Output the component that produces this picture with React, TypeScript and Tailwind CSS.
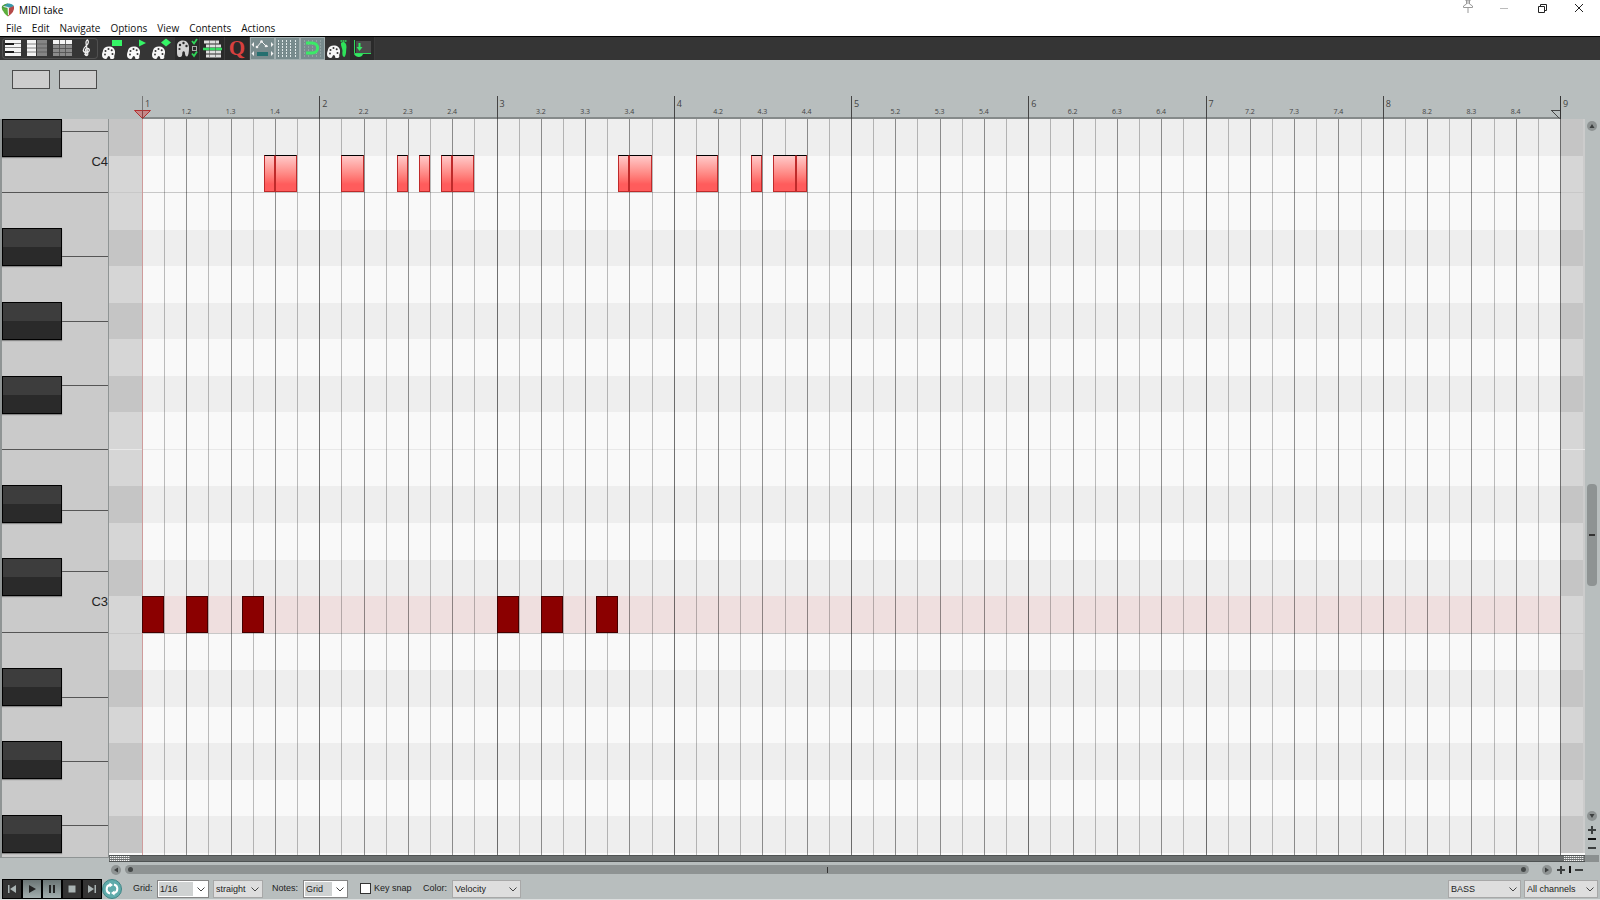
import { useState, type ReactNode } from 'react'

interface Note {
  start: number
  end: number
}

interface PianoKey {
  name: string
  size: number
}

const MENU = ['File', 'Edit', 'Navigate', 'Options', 'View', 'Contents', 'Actions']

const MEASURES = [1, 2, 3, 4, 5, 6, 7, 8]
const BEATS = [1, 2, 3, 4]
const TOTAL_STEPS = 128

// Top to bottom, one entry per semitone
const ROWS = [
  'C#4', 'C4', 'B3', 'A#3', 'A3', 'G#3', 'G3', 'F#3', 'F3', 'E3',
  'D#3', 'D3', 'C#3', 'C3', 'B2', 'A#2', 'A2', 'G#2', 'G2', 'F#2',
]

// White keys, size in twelfths of a row
const WHITE_KEYS: PianoKey[] = [
  { name: 'D4', size: 4 },
  { name: 'C4', size: 20 },
  { name: 'B3', size: 21 },
  { name: 'A3', size: 21 },
  { name: 'G3', size: 21 },
  { name: 'F3', size: 21 },
  { name: 'E3', size: 20 },
  { name: 'D3', size: 20 },
  { name: 'C3', size: 20 },
  { name: 'B2', size: 21 },
  { name: 'A2', size: 21 },
  { name: 'G2', size: 21 },
  { name: 'F2', size: 9 },
]

// Start and end in sixteenths
const NOTES: Record<string, Note[]> = {
  C4: [
    { start: 11, end: 12 },
    { start: 12, end: 14 },
    { start: 18, end: 20 },
    { start: 23, end: 24 },
    { start: 25, end: 26 },
    { start: 27, end: 28 },
    { start: 28, end: 30 },
    { start: 43, end: 44 },
    { start: 44, end: 46 },
    { start: 50, end: 52 },
    { start: 55, end: 56 },
    { start: 57, end: 59 },
    { start: 59, end: 60 },
  ],
  C3: [
    { start: 0, end: 2 },
    { start: 4, end: 6 },
    { start: 9, end: 11 },
    { start: 32, end: 34 },
    { start: 36, end: 38 },
    { start: 41, end: 43 },
  ],
}

const isBlack = (name: string) => name.includes('#')

function Palette({ x, y }: { x: number; y: number }) {
  return (
    <g transform={`translate(${x} ${y})`}>
      <path
        d="M1 4.5C1.5 1.5 5 0 8 .6C11.5 1.2 13.5 4 13 7C12.8 9 12 9.5 12.3 11C12.5 12.5 11.5 13 10 13H8.5C8 12.5 8.3 10 6.8 10C5.3 10 5.5 13 4 13C1.5 13 0 11.5 0 9C0 7 .7 6.500 1 4.500Z"
        fill="#f7f7f7"
      />
      <g fill="#333">
        <circle cx="3.500" cy="5" r="1" />
        <circle cx="6.500" cy="3" r="1" />
        <circle cx="9.700" cy="4.200" r="1" />
        <circle cx="3" cy="8.500" r=".9" />
        <circle cx="10.500" cy="8" r="1" />
      </g>
    </g>
  )
}

const TOOLS: { label: string; tone: 'flat' | 'dark' | 'active'; icon: ReactNode }[] = [
  {
    label: 'Piano roll view',
    tone: 'flat',
    icon: (
      <>
        <rect x="5" y="4" width="16" height="16" fill="#f4f4f4" />
        <path d="M13 7.500H21M13 11.500H21M5 11.500H13M13 16.500H21" stroke="#666" strokeWidth=".8" />
        <path d="M5 8H14M5 16H14" stroke="#1a1a1a" strokeWidth="2" />
      </>
    ),
  },
  {
    label: 'Named notes view',
    tone: 'flat',
    icon: (
      <>
        <rect x="2" y="4" width="9" height="16" fill="#f4f4f4" />
        <rect x="12" y="4" width="10" height="16" fill="#858585" />
        <path d="M2 8H22M2 12H22M2 16H22" stroke="#555" strokeWidth=".7" />
      </>
    ),
  },
  {
    label: 'Event list view',
    tone: 'flat',
    icon: (
      <>
        <rect x="3" y="4" width="19" height="16" fill="#8b8b8b" />
        <rect x="3" y="4" width="19" height="4" fill="#f4f4f4" />
        <path d="M3 8.500H22M3 12.500H22M3 16.500H22M9.500 4V20M15.500 4V20" stroke="#4c4c4c" strokeWidth=".8" />
      </>
    ),
  },
  {
    label: 'Musical notation view',
    tone: 'flat',
    icon: (
      <>
        <path
          d="M10.500 17.500C9.500 19.500 12.800 20.500 12.800 18L11 7C10.800 5 12 4 12.600 4C13.800 5.500 13 8 11.500 9.500C9.500 11.500 8 12.500 8.300 14.500C8.800 17 13.800 17.300 14.300 14.500C14.500 11.800 10.500 11.500 10.500 14C10.500 14.800 11 15.300 11.500 15.500"
          fill="none"
          stroke="#eee"
          strokeWidth="1.300"
        />
        <circle cx="10.700" cy="18.300" r="1.200" fill="#eee" />
      </>
    ),
  },
  {
    label: 'Color by track',
    tone: 'flat',
    icon: (
      <>
        <Palette x={2} y={10} />
        <rect x="12" y="4" width="10" height="6" fill="#35f566" />
      </>
    ),
  },
  {
    label: 'Color by take',
    tone: 'flat',
    icon: (
      <>
        <Palette x={2} y={10} />
        <path d="M14 3.500L21 7L14 10.500Z" fill="#35f566" />
      </>
    ),
  },
  {
    label: 'Color by velocity',
    tone: 'flat',
    icon: (
      <>
        <Palette x={2} y={10} />
        <path d="M16 2.500L21 6.500L16 10.500L11 6.500Z" fill="#35f566" />
      </>
    ),
  },
  {
    label: 'Channel colors',
    tone: 'dark',
    icon: (
      <>
        <path
          d="M2 10C2 6 5 4.500 8 4.500C12 4.500 14 8 14 12C14 15 13.500 20.500 12 20.500C10.500 20.500 10 19 9.800 16C9 14.500 7.500 15 7.300 17C7.300 19 7 21 5 21C2.500 21 2 19 2 16Z"
          fill="#d2d2d2"
        />
        <g fill="#2a2a2a">
          <circle cx="5" cy="9" r="1.200" />
          <circle cx="8.500" cy="7" r="1.200" />
          <circle cx="11.500" cy="10" r="1.200" />
          <circle cx="4.500" cy="13" r="1.100" />
        </g>
        <path d="M17 5L19 7.500L22 3M17 17.500L19 20L22 15.500" fill="none" stroke="#2fd558" strokeWidth="1.800" />
        <rect x="17.500" y="10.500" width="4" height="4" fill="none" stroke="#aaa" />
      </>
    ),
  },
  {
    label: 'Filter events',
    tone: 'dark',
    icon: (
      <>
        <path d="M4 6H19M6 10H21M6 16H21M6 20H21" stroke="#dedede" strokeWidth="3" />
        <path d="M3 13H22" stroke="#35db60" strokeWidth="2.500" />
        <path d="M9.500 4V21M15.500 4V21" stroke="#555" strokeWidth=".6" />
      </>
    ),
  },
  {
    label: 'Quantize',
    tone: 'dark',
    icon: (
      <text x="12" y="19" textAnchor="middle" fill="#d8403f" className="font-['Liberation_Serif',serif] text-[21px] font-bold">
        Q
      </text>
    ),
  },
  {
    label: 'Move CC with events',
    tone: 'active',
    icon: (
      <>
        <path d="M7 11L11.500 5.500L15.500 9.500L18 10.500" fill="none" stroke="#f2f2f2" strokeWidth="1" />
        <g fill="#f2f2f2">
          <circle cx="7" cy="11" r="1.300" />
          <circle cx="11.500" cy="5.500" r="1.300" />
          <circle cx="16" cy="10" r="1.300" />
          <path d="M4 6V11L1.500 8.500ZM21 6V11L23.500 8.500ZM4 15V20L1.500 17.500ZM21 15V20L23.500 17.500Z" />
        </g>
        <rect x="7" y="16" width="11" height="4" fill="#236f6f" />
      </>
    ),
  },
  {
    label: 'Toggle grid',
    tone: 'active',
    icon: (
      <path d="M3.500 4V21M7.500 4V21M11.500 4V21M15.500 4V21M20.500 4V21" stroke="#dfe8e8" strokeWidth="1" strokeDasharray="2 1" />
    ),
  },
  {
    label: 'Snap to grid',
    tone: 'active',
    icon: (
      <>
        <path d="M4.500 4V21M8.500 4V21M12.500 4V21M16.500 4V21M20.500 4V21" stroke="#92a3a3" strokeWidth="1" strokeDasharray="2 1" />
        <path d="M6 7H12C19.500 7 19.500 17 12 17H6" fill="none" stroke="#3bea67" strokeWidth="3" />
      </>
    ),
  },
  {
    label: 'Step input',
    tone: 'flat',
    icon: (
      <>
        <Palette x={2} y={9} />
        <path d="M16 7C18 5 21.500 6 21.500 11C21 14 21.500 19 19.500 21C17.500 21 17 18 17.500 15C17.500 12 15.500 10 16 7Z" fill="#2fe35b" />
        <path d="M15.500 5H22" stroke="#2fe35b" strokeWidth="1.500" strokeDasharray="1.500 .5" />
      </>
    ),
  },
  {
    label: 'Dock editor',
    tone: 'dark',
    icon: (
      <>
        <rect x="6" y="5" width="15" height="12" fill="#4b4b4b" />
        <path d="M4.500 4V17.500H21" fill="none" stroke="#2ed95a" strokeWidth="1" />
        <path d="M9.500 7V12" stroke="#35e763" strokeWidth="2" />
        <path d="M6.500 11H12.500L9.500 15ZM4 18H13C12 22 6 22 4 18Z" fill="#35e763" />
      </>
    ),
  },
]

const TONES = {
  flat: 'bg-[#353535]',
  dark: 'bg-[#2a2a2a] border-r border-[#3b3b3b]',
  active: 'bg-[#788b8d] border border-[#a0adae]',
}

function Toolbar() {
  return (
    <div className="flex h-6 shrink-0 border-t border-black bg-[#353535]">
      <div className="flex">
        {TOOLS.map((tool, i) => (
          <button
            key={tool.label}
            aria-label={tool.label}
            className={`relative flex h-full w-[25px] items-center justify-center overflow-hidden ${TONES[tool.tone]}`}
          >
            {i < 4 && (
              <span
                className={`absolute inset-y-px border-y border-[#505050] ${
                  i === 0 ? 'left-[2px] right-0 rounded-l border-l' : i === 3 ? 'left-0 right-[2px] rounded-r border-r' : 'inset-x-0'
                }`}
              />
            )}
            <svg viewBox="0 1 25 23" className="relative h-[23px] w-[25px] shrink-0">
              {tool.icon}
            </svg>
          </button>
        ))}
      </div>
    </div>
  )
}

function TitleBar() {
  return (
    <header className="flex h-5 shrink-0 items-center bg-white pl-px text-black">
      <svg viewBox="0 0 14 14" className="h-[14px] w-[14px]">
        <path d="M1 3Q4 0 7 .5L7 6L2 8Q0 5 1 3Z" fill="#4d9b3c" />
        <path d="M7 .5Q11 0 13 3L10 5L3 3.500Q5 1 7 .5Z" fill="#3c9aa9" />
        <path d="M13 3Q14 9 7 13.500L8 5Z" fill="#b54a48" />
        <path d="M1 5Q2 10 7 13.500L7 6Z" fill="#5cae3c" />
        <path d="M2.500 3.500L7 4.500L7.500 12" fill="none" stroke="#f2f2f2" strokeWidth="1" />
      </svg>
      <h1 className="pl-1 text-[10px] leading-5">MIDI take</h1>
      <div className="ml-auto flex h-full items-start">
        <button aria-label="Pin" className="flex w-[26px] justify-center">
          <svg viewBox="0 0 14 14" className="h-[14px] w-[14px]" fill="none" stroke="#999" strokeWidth="1">
            <path d="M4 0H10M5.500 0V4L2.500 6V7.500H11.500V6L8.500 4V0M7 0V4M7 8V13" />
          </svg>
        </button>
        <button aria-label="Minimize" className="flex h-4 w-[46px] items-center justify-center">
          <span className="h-px w-2 bg-[#bbb]" />
        </button>
        <button aria-label="Restore" className="flex h-4 w-[30px] items-center justify-center">
          <svg viewBox="0 0 10 10" className="h-[10px] w-[10px]" fill="none" stroke="#222">
            <path d="M1.500 3.500H7.500V9.500H1.500ZM3.500 3V1.500H9.500V7.500H8" />
          </svg>
        </button>
        <button aria-label="Close" className="flex h-4 w-[43px] items-center justify-center">
          <svg viewBox="0 0 10 10" className="h-[10px] w-[10px]" fill="none" stroke="#222">
            <path d="M1 1L9 9M9 1L1 9" />
          </svg>
        </button>
      </div>
    </header>
  )
}

function Ruler() {
  return (
    <div className="flex h-[59px] shrink-0 flex-col pr-[39px]">
      <div className="flex h-9 items-start gap-[9px] pl-3 pt-[10px]">
        <button aria-label="Slot 1" className="h-[19px] w-[38px] border border-[#4b4b4b] bg-[#cdcdcd]" />
        <button aria-label="Slot 2" className="h-[19px] w-[38px] border border-[#4b4b4b] bg-[#cdcdcd]" />
      </div>
      <div className="ml-[142px] mr-px flex h-[23px] text-[#444]">
        {MEASURES.map((m) => (
          <div key={m} className="relative flex flex-1 border-b-2 border-[#858a8a]">
            <span className={`absolute bottom-[-2px] left-0 top-0 w-px ${m === 1 ? 'bg-[#777]' : 'bg-[#444]'}`} />
            <span className="absolute left-[3px] top-[2px] text-[9px] leading-3">{m}</span>
            {BEATS.map((b) => (
              <div key={b} className="flex flex-1 items-end">
                {b > 1 && (
                  <span className="w-0 whitespace-nowrap text-[7px] leading-[11px]">
                    <span className="flex w-5 -translate-x-1/2 justify-center">{`${m}.${b}`}</span>
                  </span>
                )}
              </div>
            ))}
            {m === 1 && (
              <svg viewBox="0 0 17 9" className="absolute bottom-[-2px] left-[-8px] h-[9px] w-[17px]">
                <path d="M.5 .5H16.500L8.500 8.500Z" fill="#c66" fillOpacity=".6" stroke="#b33030" />
                <path d="M8.500 0V9" stroke="#844" />
              </svg>
            )}
            {m === 8 && (
              <>
                <span className="absolute bottom-[-2px] right-[-1px] top-0 w-px bg-[#333]" />
                <span className="absolute left-full top-[2px] pl-[3px] text-[9px] leading-3">9</span>
                <svg viewBox="0 0 9 9" className="absolute bottom-[-2px] right-0 h-[9px] w-[9px]" fill="none" stroke="#444">
                  <path d="M0 .5H9M.5 .5L8.500 8.500" />
                </svg>
              </>
            )}
          </div>
        ))}
      </div>
    </div>
  )
}

function Keyboard() {
  return (
    <div className="flex w-[109px] shrink-0 flex-col pb-1">
      <div className="flex flex-1 flex-col border-b border-l-2 border-r border-[#8f9494] bg-[#cacaca]">
        <div className="relative flex flex-1 flex-col">
          {WHITE_KEYS.map((key, i) => (
            <div
              key={key.name}
              className={`flex basis-0 items-end justify-end text-[13px] leading-[15px] text-[#222] ${
                i < WHITE_KEYS.length - 1 ? 'border-b border-[#555]' : ''
              }`}
              style={{ flexGrow: key.size }}
            >
              {key.name.startsWith('C') && <span className="mb-[23px]">{key.name}</span>}
            </div>
          ))}
          <div className="absolute inset-y-0 left-0 flex w-[60px] flex-col">
            {ROWS.map((row) => (
              <div key={row} className="flex-1">
                {isBlack(row) && (
                  <div className="h-[38px] border border-black bg-linear-to-b from-[#3d3d3d] from-50% to-[#2a2a2a] to-50% shadow-[0_1px_1px_#888]" />
                )}
              </div>
            ))}
          </div>
        </div>
        <div className="h-1" />
      </div>
    </div>
  )
}

function GridLines() {
  return (
    <>
      <div className="pointer-events-none absolute inset-y-0 left-[34px] right-6 flex">
        {MEASURES.map((m) => (
          <div key={m} className="flex flex-1">
            {BEATS.map((b) => (
              <div key={b} className="flex flex-1">
                <div className="flex-1 border-r border-black/25" />
                <div className={`flex-1 border-r ${b === 4 ? 'border-black/55' : 'border-black/42'}`} />
              </div>
            ))}
          </div>
        ))}
      </div>
      <div className="pointer-events-none absolute inset-y-0 left-[33px] w-px bg-[#cf9c9c]" />
    </>
  )
}

function Notes({ row }: { row: string }) {
  return (
    <>
      {(NOTES[row] ?? []).map((note) => (
        <div
          key={note.start}
          className={
            row === 'C4'
              ? 'absolute -top-px bottom-0 border border-[#bf2a2a] border-t-black bg-linear-to-b from-[#ffc9c9] to-[#ff5c5c] to-80%'
              : 'absolute inset-y-0 border border-[#400] bg-[#8b0000]'
          }
          style={{
            left: `${(note.start / TOTAL_STEPS) * 100}%`,
            width: `${((note.end - note.start) / TOTAL_STEPS) * 100}%`,
          }}
        />
      ))}
    </>
  )
}

function Roll() {
  return (
    <div className="relative flex flex-1 flex-col bg-[#f9f9f9]">
      {ROWS.map((row) => {
        const edge = isBlack(row) ? 'bg-[#c5c5c5]' : 'bg-[#d6d6d6]'
        const fill = row === 'C3' ? 'bg-[#efdfdf]' : isBlack(row) ? 'bg-[#eee]' : 'bg-[#f9f9f9]'
        const line = row.startsWith('C') && !isBlack(row) ? 'border-b border-[#c8c8c8]' : row === 'F3' ? 'border-b border-[#e8e8e8]' : ''
        return (
          <div key={row} className={`flex flex-1 ${line}`}>
            <div className={`w-[33px] ${edge}`} />
            <div className={`flex-1 ${fill}`} />
            <div className={`w-6 border-r-2 border-[#ccc] ${edge}`} />
          </div>
        )
      })}
      <div className="h-[2px]" />
      <GridLines />
      {/* Note layer shares the row geometry */}
      <div className="absolute inset-y-0 left-[33px] right-[25px] flex flex-col pb-[2px]">
        {ROWS.map((row) => (
          <div key={row} className="relative flex-1">
            <Notes row={row} />
          </div>
        ))}
      </div>
    </div>
  )
}

function Grip() {
  return (
    <svg viewBox="0 0 20 5" className="h-[5px] w-5">
      <path d="M0 .5H20M0 2.500H20M0 4.500H20" stroke="#f4f4f4" strokeDasharray="1.400 .6" />
    </svg>
  )
}

function RoundButton({ label, points }: { label: string; points: string }) {
  return (
    <button aria-label={label} className="flex h-[10px] w-[10px] shrink-0 items-center justify-center rounded-full bg-[#8e9393]">
      <svg viewBox="0 0 10 10" className="h-[10px] w-[10px]">
        <polygon points={points} fill="#3c3f3f" />
      </svg>
    </button>
  )
}

function ZoomButton({ label, plus }: { label: string; plus?: boolean }) {
  return (
    <button aria-label={label} className="flex h-2 w-2 shrink-0 items-center justify-center">
      <svg viewBox="0 0 8 8" className="h-2 w-2" stroke="#3c3f3f" strokeWidth="2">
        <path d={plus ? 'M0 4H8M4 0V8' : 'M0 4H8'} />
      </svg>
    </button>
  )
}

function VerticalScroll() {
  return (
    <div className="flex w-[15px] shrink-0 flex-col items-center pr-px">
      <div className="flex flex-1 flex-col items-center pb-[3px] pt-[2px]">
        <RoundButton label="Scroll up" points="5,3 7.500,7 2.500,7" />
        <div className="flex w-full flex-1 flex-col items-center">
          <div className="grow-[353] basis-0" />
          <div className="flex w-[10px] grow-[102] basis-0 items-center justify-center rounded bg-[#8e9393]">
            <span className="h-[2px] w-[6px] bg-[#333]" />
          </div>
          <div className="grow-[225] basis-0" />
        </div>
        <RoundButton label="Scroll down" points="5,7 7.500,3 2.500,3" />
        <div className="flex flex-col items-center gap-1 pt-[5px]">
          <ZoomButton label="Zoom in vertically" plus />
          <span className="h-[2px] w-2 bg-[#111]" />
          <ZoomButton label="Zoom out vertically" />
        </div>
      </div>
      <div className="h-[7px] w-full bg-[#8b9090]" />
    </div>
  )
}

function HorizontalScroll() {
  return (
    <div className="flex h-[15px] shrink-0 items-center pl-[111px] pr-[17px]">
      <RoundButton label="Scroll left" points="3,5 7,2.500 7,7.500" />
      <div className="ml-1 mr-[13px] flex h-[9px] flex-1 items-center justify-between rounded-full bg-[#8e9393] px-[3px]">
        <span className="h-[5px] w-[5px] rounded-full bg-[#444848]" />
        <span className="h-[6px] w-px bg-[#333]" />
        <span className="h-[5px] w-[5px] rounded-full bg-[#444848]" />
      </div>
      <RoundButton label="Scroll right" points="7,5 3,2.500 3,7.500" />
      <div className="flex items-center gap-1 pl-[5px]">
        <ZoomButton label="Zoom in horizontally" plus />
        <span className="h-[7px] w-[2px] bg-[#111]" />
        <ZoomButton label="Zoom out horizontally" />
      </div>
    </div>
  )
}

const TRANSPORT = [
  { label: 'Go to start', lit: false, path: 'M6 6H7.500V14H6ZM14 6V14L8 10Z' },
  { label: 'Play', lit: true, path: 'M7 6L14 10L7 14Z' },
  { label: 'Pause', lit: true, path: 'M7 6H9V14H7ZM11 6H13V14H11Z' },
  { label: 'Stop', lit: false, path: 'M6.500 6.500H13.500V13.500H6.500Z' },
  { label: 'Go to end', lit: false, path: 'M6 6L12 10L6 14ZM12.500 6H14V14H12.500Z' },
]

interface DropDownProps {
  label: string
  options: string[]
  boxed?: boolean
  width: string
}

function DropDown({ label, options, boxed, width }: DropDownProps) {
  return (
    <div className={`relative flex h-[18px] border p-px ${width} ${boxed ? 'border-[#858585] bg-white' : 'border-[#a8a8a8] bg-[#dedede]'}`}>
      <select
        aria-label={label}
        className={`mr-[14px] h-full flex-1 appearance-none pl-px leading-[14px] outline-none ${boxed ? 'bg-[#cfd2d2]' : ''}`}
      >
        {options.map((o) => (
          <option key={o}>{o}</option>
        ))}
      </select>
      <svg viewBox="0 0 8 5" className="pointer-events-none absolute right-[3px] top-[6px] h-[5px] w-2" fill="none" stroke="#444">
        <path d="M.5 .5L4 4L7.500 .5" />
      </svg>
    </div>
  )
}

function BottomBar() {
  const [keySnap, setKeySnap] = useState(false)

  return (
    <footer className="flex h-[23px] shrink-0 items-center border-b border-[#dcdede] pl-[2px] pr-[2px] pt-px text-[9px] text-[#222]">
      <div className="flex h-5 bg-black">
        {TRANSPORT.map((t) => (
          <button
            key={t.label}
            aria-label={t.label}
            className={`h-5 w-5 border border-black ${t.lit ? 'bg-linear-to-b from-[#6b7575] to-[#a3afaf]' : 'bg-[#333]'}`}
          >
            <svg viewBox="1 1 18 18" className="h-full w-full">
              <path d={t.path} fill={t.lit ? '#222' : '#a9b3b3'} />
            </svg>
          </button>
        ))}
      </div>
      <button aria-label="Toggle repeat" className="flex h-5 w-5 items-center justify-center rounded-full border border-[#3f8686] bg-[#5fabab]">
        <svg viewBox="0 0 14 14" className="h-[14px] w-[14px]" fill="none" stroke="#fff" strokeWidth="2">
          <path d="M5 11.500A4.500 4.500 0 0 1 5 2.800M9 2.500A4.500 4.500 0 0 1 9 11.200" />
          <path d="M4.500 .5L8 3L4.500 5.500ZM9.500 8.500L6 11L9.500 13.500Z" fill="#fff" stroke="none" />
        </svg>
      </button>
      <span className="w-[35px] pl-[11px]">Grid:</span>
      <DropDown label="Grid size" options={['1/16', '1/8', '1/4']} boxed width="w-[52px]" />
      <div className="w-1" />
      <DropDown label="Grid type" options={['straight', 'triplet', 'dotted']} width="w-[50px]" />
      <span className="w-10 pl-[9px]">Notes:</span>
      <DropDown label="Note length" options={['Grid', '1/16', '1/8']} boxed width="w-[45px]" />
      <label className="flex w-[75px] items-center gap-[3px] whitespace-nowrap pl-3">
        <input
          type="checkbox"
          checked={keySnap}
          onChange={(e) => setKeySnap(e.target.checked)}
          className="h-[11px] w-[11px] appearance-none border border-[#333] bg-white checked:bg-[#444]"
        />
        Key snap
      </label>
      <span className="w-[29px]">Color:</span>
      <DropDown label="Color" options={['Velocity', 'Channel', 'Pitch']} width="w-[69px]" />
      <div className="ml-auto flex gap-[3px]">
        <DropDown label="Track" options={['BASS']} width="w-[73px]" />
        <DropDown label="Channels" options={['All channels', 'Channel 1']} width="w-[74px]" />
      </div>
    </footer>
  )
}

export default function App() {
  return (
    <div className="flex h-screen flex-col overflow-hidden bg-[#b8bebe] font-['Liberation_Sans',sans-serif]">
      <div className="shrink-0 bg-white font-['Open_Sans','Noto_Sans',sans-serif]">
        <TitleBar />
        <nav className="flex h-4 gap-[10px] pl-[6px] text-[10px] leading-[14px] text-[#111]">
          {MENU.map((item) => (
            <button key={item}>{item}</button>
          ))}
        </nav>
      </div>
      <Toolbar />
      <div className="shrink-0 font-['Open_Sans',sans-serif]">
        <Ruler />
      </div>
      <main className="flex min-h-0 flex-1">
        <Keyboard />
        <div className="flex flex-1 flex-col">
          <Roll />
          <div className="flex h-[7px] shrink-0 items-center justify-between border-y border-[#4f5353] bg-[#6b6f6f] px-px">
            <Grip />
            <Grip />
          </div>
        </div>
        <VerticalScroll />
      </main>
      <HorizontalScroll />
      <BottomBar />
    </div>
  )
}
